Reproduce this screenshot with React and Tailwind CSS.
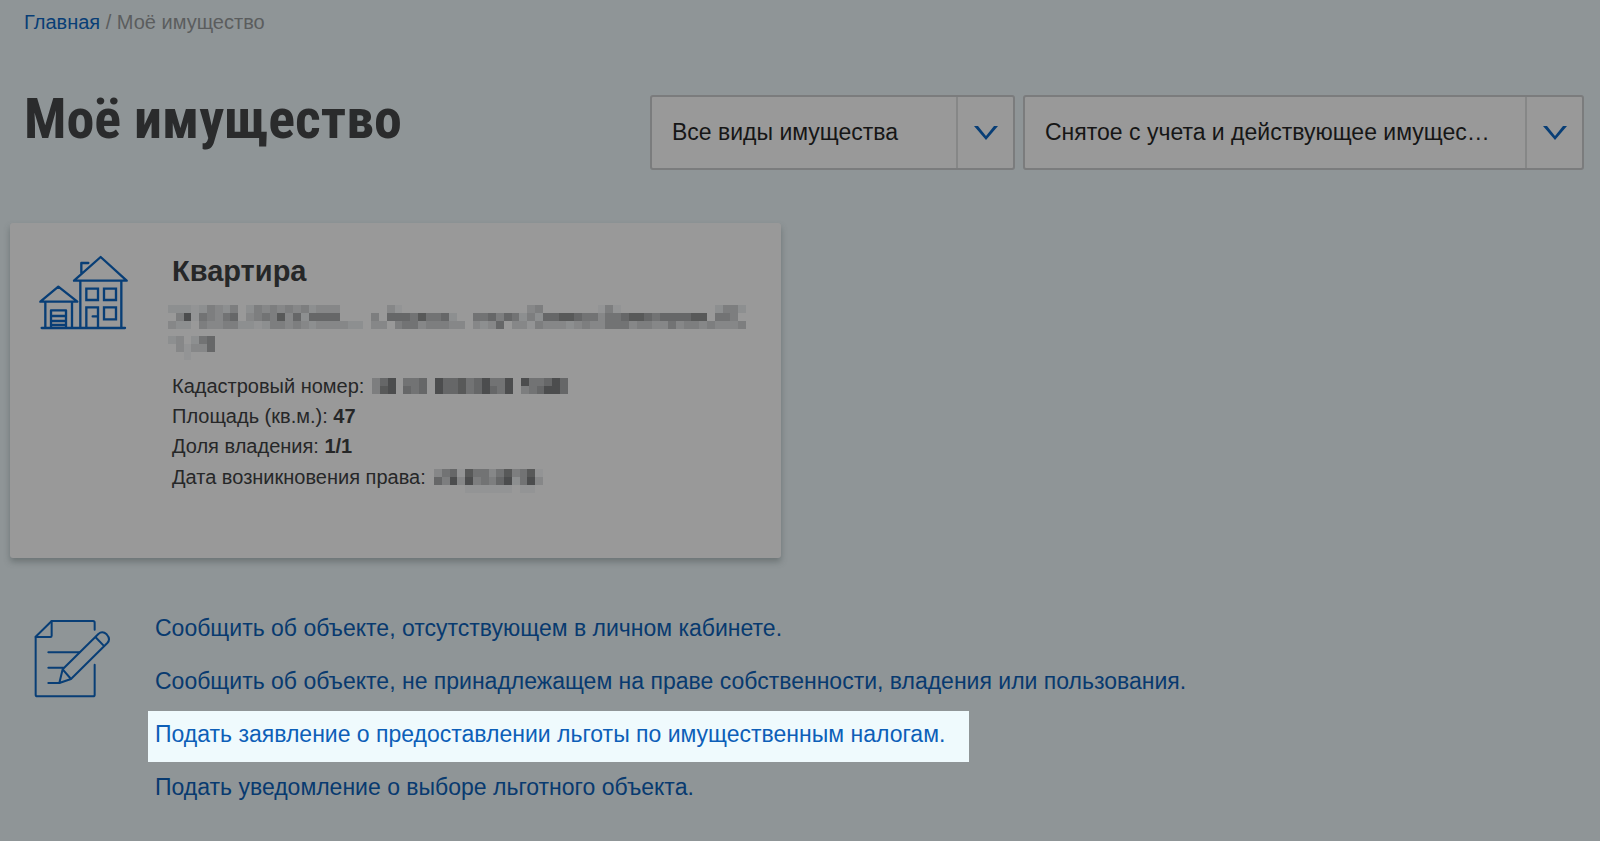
import React from "react";

const SHADES = ["#999999", "#939495", "#8d8f90", "#868788", "#7d7e7f", "#727374", "#666768", "#585959", "#4c4d4e"];

const ADDRESS = [
  "22212432402434343423330000003100000000000000003400000001410000000000002442",
  "04815435603454736266660000406665755620055646524266776553556776566667705540",
  "32204334422124434323333220330455344433032360331433323433555344335344343334",
  "",
  "230256",
  "031336",
  "001000",
];
const CADASTRAL = ["4680556086675685580855686", "4780656086675686580456886"];
const DATE = ["35617553574571", "64838454682583", "00001111110110"];

function Mosaic({ rows, className }) {
  const cols = rows[0].length;
  return (
    <svg
      className={className}
      viewBox={`0 0 ${cols} ${rows.length}`}
      preserveAspectRatio="none"
      shapeRendering="crispEdges"
      aria-hidden="true"
    >
      {rows.flatMap((row, y) =>
        [...row].map((level, x) =>
          level === "0" ? null : (
            <rect key={`${x}-${y}`} x={x} y={y} width="1" height="1" fill={SHADES[Number(level)]} />
          )
        )
      )}
    </svg>
  );
}

function HouseIcon() {
  return (
    <svg
      className="h-[76px] w-[89px] shrink-0 text-[#083e76]"
      viewBox="58 30 267 228"
      fill="none"
      stroke="currentColor"
      strokeWidth="7"
      strokeLinecap="round"
      strokeLinejoin="round"
      aria-hidden="true"
    >
      <path d="M62 170 116 125 173 170ZM77 170V248M157 170V248M94 248V196H139V248M94 213H139M94 228H139M94 240H139" />
      <path d="M163 107 243 36 321 107ZM185 84V54H206M182 108V248M305 108V248M66 249H316" />
      <path strokeLinejoin="miter" d="M200 131H235V165H200ZM253 131H289V165H253ZM253 187H289V223H253ZM200 248V187H235V248M219 214H234" />
    </svg>
  );
}

function NoteIcon() {
  return (
    <svg
      className="h-[79px] w-[77px] shrink-0 text-[#083e76]"
      viewBox="102 237 231 237"
      fill="none"
      stroke="currentColor"
      strokeWidth="6"
      strokeLinecap="round"
      strokeLinejoin="round"
      aria-hidden="true"
    >
      <path d="M284 269V248Q284 243 279 243H155L107 290V464Q107 469 112 469H279Q284 469 284 464V374" />
      <path d="M155 243V287Q155 291 151 291H107M145 337H238M145 383H190M145 429H178" />
      <path d="M188 388 295 282Q307 271 320 283 333 297 322 309L213 417 178 429ZM286 291 311 317M188 388 213 417" />
    </svg>
  );
}

function Dropdown({ label, value, className }) {
  return (
    <div className={`relative h-[75px] ${className}`}>
      <select
        aria-label={label}
        className="h-full w-full appearance-none truncate rounded-[3px] border-2 border-[#7b7c7d] bg-[#999999] pl-5 pr-[84px] text-[23px] text-[#161616]"
      >
        <option>{value}</option>
      </select>
      <span className="pointer-events-none absolute inset-y-0.5 right-0.5 flex w-[57px] items-center justify-center border-l-2 border-[#868787]">
        <svg className="h-3.5 w-6 text-[#083e76]" viewBox="0 0 24 14" fill="currentColor" aria-hidden="true">
          <path d="M0 0H4L12 10 20 0H24L12 14Z" />
        </svg>
      </span>
    </div>
  );
}

const LINKS = [
  { text: "Сообщить об объекте, отсутствующем в личном кабинете." },
  { text: "Сообщить об объекте, не принадлежащем на праве собственности, владения или пользования." },
  { text: "Подать заявление о предоставлении льготы по имущественным налогам.", active: true },
  { text: "Подать уведомление о выборе льготного объекта." },
];

export default function App() {
  return (
    <div className="min-h-screen bg-[#8f9597] font-['Liberation_Sans',Arial,sans-serif] text-[#262728]">
      <nav aria-label="Навигация" className="px-6 pt-2 text-xl leading-7 text-[#5b5d5e]">
        <a href="#home" className="text-[#083e76]">Главная</a> / <span>Моё имущество</span>
      </nav>

      <header className="flex flex-wrap items-start justify-between gap-4 pl-6 pr-4 pt-[59px]">
        <h1 className="font-['Roboto_Condensed',Roboto,sans-serif] text-[56px] font-bold leading-[48px] text-[#2a2b2c]">
          Моё имущество
        </h1>
        <div className="flex flex-wrap gap-2">
          <Dropdown label="Вид имущества" value="Все виды имущества" className="w-[365px]" />
          <Dropdown label="Статус имущества" value="Снятое с учета и действующее имущество" className="w-[561px]" />
        </div>
      </header>

      <main className="px-2.5 pt-[53px]">
        <article className="flex min-h-[335px] w-full max-w-[771px] gap-11 rounded-[3px] bg-[#999999] pl-[29px] pr-8 pt-[30px] shadow-[0_4px_6px_0_rgba(60,70,70,0.4)]">
          <div className="pt-0.5">
            <HouseIcon />
          </div>
          <div className="min-w-0 flex-1">
            <h2 className="text-[29px] font-bold leading-9">Квартира</h2>
            <Mosaic rows={ADDRESS} className="-ml-1 mt-4 h-[55px] w-[578px]" />
            <ul className="mt-[11px] text-xl leading-[30px]">
              <li className="flex items-center gap-2">
                Кадастровый номер: <Mosaic rows={CADASTRAL} className="h-4 w-[196px]" />
              </li>
              <li>Площадь (кв.м.): <b>47</b></li>
              <li>Доля владения: <b>1/1</b></li>
              <li className="flex items-center gap-2">
                Дата возникновения права: <Mosaic rows={DATE} className="mt-2 h-6 w-[109px]" />
              </li>
            </ul>
          </div>
        </article>

        <section className="flex gap-[37px] pl-6 pt-[47px]">
          <div className="pt-3.5">
            <NoteIcon />
          </div>
          <ul className="flex flex-col items-start gap-0.5 text-[23px]">
            {LINKS.map(({ text, active }) => (
              <li key={text}>
                <a
                  href="#request"
                  className={`block pb-3 pl-[7px] pr-6 pt-[7px] leading-8 ${active ? "bg-[#effafd] text-[#0d5fb8]" : "text-[#083a6f]"}`}
                >
                  {text}
                </a>
              </li>
            ))}
          </ul>
        </section>
      </main>
    </div>
  );
}
